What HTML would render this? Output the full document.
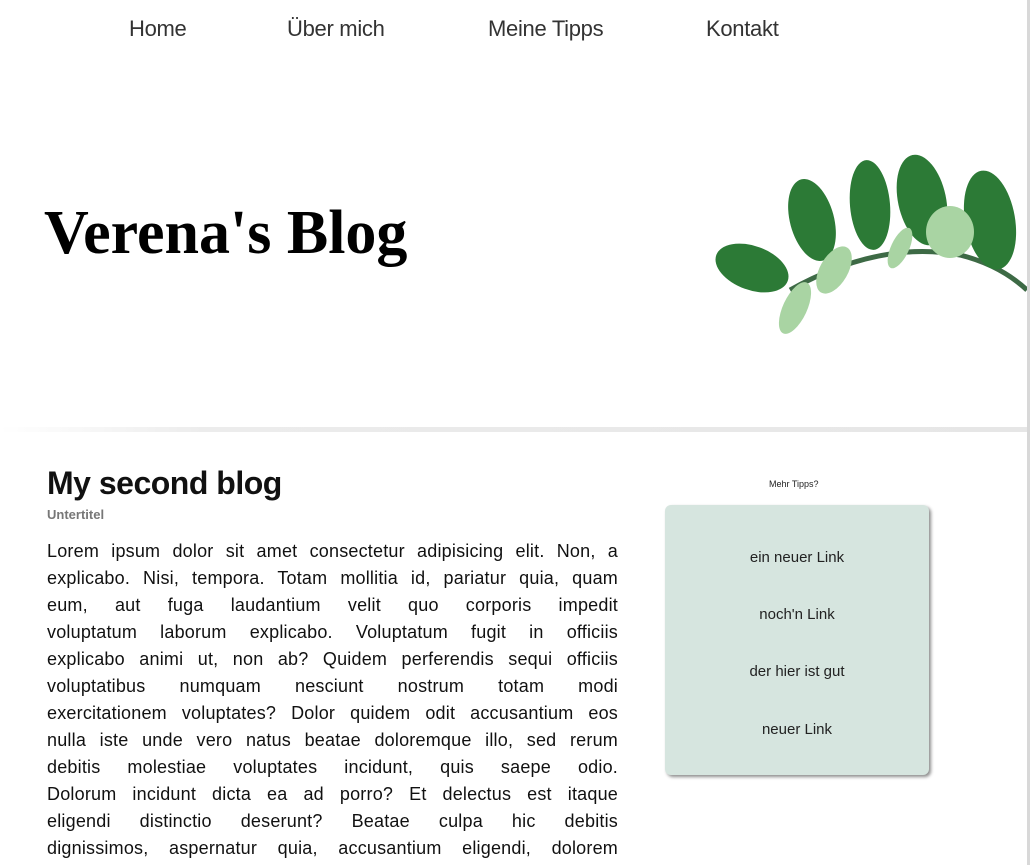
<!DOCTYPE html>
<html><head><meta charset="utf-8"><style>
*{margin:0;padding:0;box-sizing:border-box}
body{width:1030px;height:865px;overflow:hidden;background:#fff;font-family:"Liberation Sans",sans-serif;color:#111;position:relative}
.nav a{position:absolute;top:16px;font-size:22px;color:#333;text-decoration:none;letter-spacing:-0.3px}
.title{position:absolute;left:44px;top:198px;font-family:"Liberation Serif",serif;font-weight:bold;font-size:62px;letter-spacing:0px;color:#000}
.bar{position:absolute;left:0;top:427px;width:1027px;height:5px;background:linear-gradient(90deg,#fff,#ececec 20%,#e6e6e6)}
.sb{position:absolute;right:0;top:0;width:3px;height:865px;background:#d8d8d8}
h1{position:absolute;left:47px;top:465px;font-size:32px;font-weight:bold;letter-spacing:-0.5px}
.sub{position:absolute;left:47px;top:507px;font-size:13px;font-weight:bold;color:#777}
.txt{position:absolute;left:47px;top:538px;width:571px;font-size:18px;line-height:27px;letter-spacing:0.2px}
.txt div{text-align:justify;text-align-last:justify;white-space:nowrap;overflow:hidden}
.mt{position:absolute;left:769px;top:479px;font-size:9px;color:#222}
.box{position:absolute;left:665px;top:505px;width:264px;height:270px;background:#d6e5df;border-radius:6px;box-shadow:2px 2px 3px rgba(0,0,0,.45)}
.box div{position:absolute;width:100%;text-align:center;font-size:15px;color:#222}
</style></head><body>
<div class="nav"><a style="left:129px">Home</a><a style="left:287px">Über mich</a><a style="left:488px">Meine Tipps</a><a style="left:706px">Kontakt</a></div>
<div class="title">Verena's Blog</div>
<svg style="position:absolute;left:700px;top:140px" width="330" height="200" viewBox="0 0 330 200">
<path d="M90 150 Q180 100 260 115 Q300 125 327 150" stroke="#3d6a45" stroke-width="5" fill="none"/>
<g fill="#2c7a36">
<ellipse cx="52" cy="128" rx="38" ry="22" transform="rotate(20 52 128)"/>
<ellipse cx="112" cy="80" rx="22" ry="42" transform="rotate(-15 112 80)"/>
<ellipse cx="170" cy="65" rx="20" ry="45" transform="rotate(-5 170 65)"/>
<ellipse cx="222" cy="60" rx="24" ry="46" transform="rotate(-12 222 60)"/>
<ellipse cx="290" cy="80" rx="25" ry="50" transform="rotate(-10 290 80)"/>
</g>
<g fill="#a9d4a3">
<ellipse cx="95" cy="168" rx="12" ry="28" transform="rotate(25 95 168)"/>
<ellipse cx="134" cy="130" rx="14" ry="26" transform="rotate(30 134 130)"/>
<ellipse cx="200" cy="108" rx="9" ry="22" transform="rotate(25 200 108)"/>
<ellipse cx="250" cy="92" rx="24" ry="26"/>
</g></svg>
<div class="bar"></div><div class="sb"></div>
<h1>My second blog</h1>
<div class="sub">Untertitel</div>
<div class="txt">
<div>Lorem ipsum dolor sit amet consectetur adipisicing elit. Non, a</div>
<div>explicabo. Nisi, tempora. Totam mollitia id, pariatur quia, quam</div>
<div>eum, aut fuga laudantium velit quo corporis impedit</div>
<div>voluptatum laborum explicabo. Voluptatum fugit in officiis</div>
<div>explicabo animi ut, non ab? Quidem perferendis sequi officiis</div>
<div>voluptatibus numquam nesciunt nostrum totam modi</div>
<div>exercitationem voluptates? Dolor quidem odit accusantium eos</div>
<div>nulla iste unde vero natus beatae doloremque illo, sed rerum</div>
<div>debitis molestiae voluptates incidunt, quis saepe odio.</div>
<div>Dolorum incidunt dicta ea ad porro? Et delectus est itaque</div>
<div>eligendi distinctio deserunt? Beatae culpa hic debitis</div>
<div>dignissimos, aspernatur quia, accusantium eligendi, dolorem</div>
</div>
<div class="mt">Mehr Tipps?</div>
<div class="box">
<div style="top:44px">ein neuer Link</div>
<div style="top:101px">noch'n Link</div>
<div style="top:158px">der hier ist gut</div>
<div style="top:216px">neuer Link</div>
</div>
</body></html>
